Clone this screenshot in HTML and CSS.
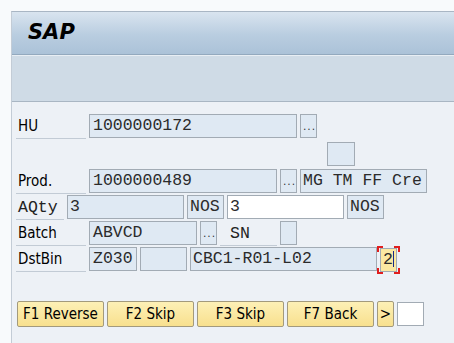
FILE: index.html
```html
<!DOCTYPE html>
<html lang="en">
<head>
    <meta charset="UTF-8">
    <title>SAP</title>
    <link rel="stylesheet" href="styles.css">
</head>
<body>
    <div class="frame">
        <!-- Title bar -->
        <div class="title-bar">
            <span class="title">SAP</span>
        </div>
        <div class="toolbar"></div>

        <!-- Screen fields -->
        <div class="screen">
            <div class="row">
                <span class="lbl">HU</span>
                <span class="fld w-hu">1000000172</span>
                <span class="fld f4">...</span>
            </div>
            <div class="row row-box">
                <span class="fld box"></span>
            </div>
            <div class="row row-prod">
                <span class="lbl">Prod.</span>
                <span class="fld w-prod">1000000489</span>
                <span class="fld f4">...</span>
                <span class="fld w-flags">MG TM FF Cre</span>
            </div>
            <div class="row">
                <span class="lbl lbl-mono">AQty</span>
                <span class="fld w-qty">3</span>
                <span class="fld w-uom">NOS</span>
                <span class="fld w-qty input">3</span>
                <span class="fld w-uom">NOS</span>
            </div>
            <div class="row row-batch">
                <span class="lbl">Batch</span>
                <span class="fld w-batch">ABVCD</span>
                <span class="fld f4">...</span>
                <span class="lbl lbl-mono lbl-sn">SN</span>
                <span class="fld f4"></span>
            </div>
            <div class="row">
                <span class="lbl">DstBin</span>
                <span class="fld w-type">Z030</span>
                <span class="fld w-sec"></span>
                <span class="fld w-bin">CBC1-R01-L02</span>
                <span class="focus">
                    <span class="fld f4 active">2<i class="caret"></i></span>
                </span>
            </div>

            <!-- Function keys -->
            <div class="keys">
                <button class="key">F1 Reverse</button>
                <button class="key">F2 Skip</button>
                <button class="key">F3 Skip</button>
                <button class="key">F7 Back</button>
                <button class="key key-more">&gt;</button>
                <span class="fld key-input input"></span>
            </div>
        </div>
    </div>
</body>
</html>
```

FILE: styles.css
```css
body {
    margin: 0;
    background: #f8fafc;
    font-family: "DejaVu Sans Condensed", "DejaVu Sans", sans-serif;
    overflow: hidden;
}
.frame {
    margin: 11px 0 0 11px;
    border-left: 1px solid #c3ccd6;
    border-top: 1px solid #a9b6c4;
    height: calc(100vh - 12px);
    background: #edf1f6;
}
.title-bar {
    height: 42px;
    background: linear-gradient(#d9e4ef, #b9cde0 55%, #abc2d8);
    border-bottom: 1px solid #93a9be;
    display: flex;
    align-items: center;
}
.title {
    margin-left: 16px;
    margin-top: -2px;
    font-family: "DejaVu Sans", sans-serif;
    font-size: 21px;
    font-weight: bold;
    font-style: italic;
    color: #000;
}
.toolbar {
    height: 45px;
    background: #cfdbe6;
    border-top: 1px solid #e8eef4;
    border-bottom: 1px solid #a9b6c3;
}
.screen {
    padding: 12px 0 0 4px;
}
.row {
    display: flex;
    align-items: flex-end;
    gap: 3px;
    height: 24px;
    margin-bottom: 2px;
}
.row-box {
    margin-top: 4px;
}
.row-prod {
    height: 25px;
}
.row-batch {
    margin-top: 2px;
}
.lbl {
    box-sizing: border-box;
    width: 70px;
    height: 25px;
    padding-left: 2px;
    line-height: 25px;
    font-size: 15px;
    color: #000;
    border-bottom: 1px solid #c2cbd5;
    margin-bottom: -1px;
}
.lbl-mono {
    width: 48px;
    font-family: "Liberation Mono", "Courier New", monospace;
    font-size: 16.5px;
    color: #222;
}
.lbl-sn {
    width: 57px;
    padding-left: 10px;
}
.fld {
    box-sizing: border-box;
    height: 24px;
    border: 1px solid #a2abb4;
    background: #dfe9f3;
    font-family: "Liberation Mono", "Courier New", monospace;
    font-size: 16.5px;
    line-height: 22px;
    padding-left: 2px;
    color: #2b2b2b;
    white-space: nowrap;
    overflow: hidden;
}
.f4 {
    width: 17px;
    padding: 0;
    text-align: center;
    font-size: 9px;
    line-height: 26px;
    letter-spacing: -1px;
}
.box {
    width: 28px;
    margin-left: 311px;
}
.w-hu { width: 208px; padding-left: 3px; }
.w-prod { width: 188px; padding-left: 3px; }
.w-flags { width: 127px; }
.w-qty { width: 117px; }
.w-uom { width: 37px; }
.w-batch { width: 108px; padding-left: 3px; }
.w-type { width: 48px; padding-left: 3px; }
.w-sec { width: 47px; }
.w-bin { width: 187px; }
.input {
    background: #fff;
}
.focus {
    display: flex;
    align-items: center;
    justify-content: center;
    width: 23px;
    height: 28px;
    margin: 0 0 -3px -3px;
    background:
        linear-gradient(#e01e1e, #e01e1e) left top / 6px 2px no-repeat,
        linear-gradient(#e01e1e, #e01e1e) left top / 2px 6px no-repeat,
        linear-gradient(#e01e1e, #e01e1e) right top / 6px 2px no-repeat,
        linear-gradient(#e01e1e, #e01e1e) right top / 2px 6px no-repeat,
        linear-gradient(#e01e1e, #e01e1e) left bottom / 6px 2px no-repeat,
        linear-gradient(#e01e1e, #e01e1e) left bottom / 2px 6px no-repeat,
        linear-gradient(#e01e1e, #e01e1e) right bottom / 6px 2px no-repeat,
        linear-gradient(#e01e1e, #e01e1e) right bottom / 2px 6px no-repeat;
}
.active {
    background: #fbe8a2;
    font-size: 16.5px;
    line-height: 22px;
    letter-spacing: 0;
    text-align: left;
    padding-left: 2px;
}
.caret {
    display: inline-block;
    width: 1px;
    height: 16px;
    background: #1a2a8a;
    vertical-align: -3px;
}
.keys {
    display: flex;
    gap: 3px;
    margin: 30px 0 0 1px;
}
.key {
    box-sizing: border-box;
    width: 87px;
    height: 26px;
    padding: 0;
    border: 1px solid #a39a7c;
    border-radius: 2px;
    background: linear-gradient(#fdf0b6, #f8e08e);
    font-family: "DejaVu Sans Condensed", "DejaVu Sans", sans-serif;
    font-size: 15px;
    color: #000;
}
.key-more {
    width: 17px;
}
.key-input {
    width: 27px;
    height: 24px;
    margin-top: 1px;
}
```
